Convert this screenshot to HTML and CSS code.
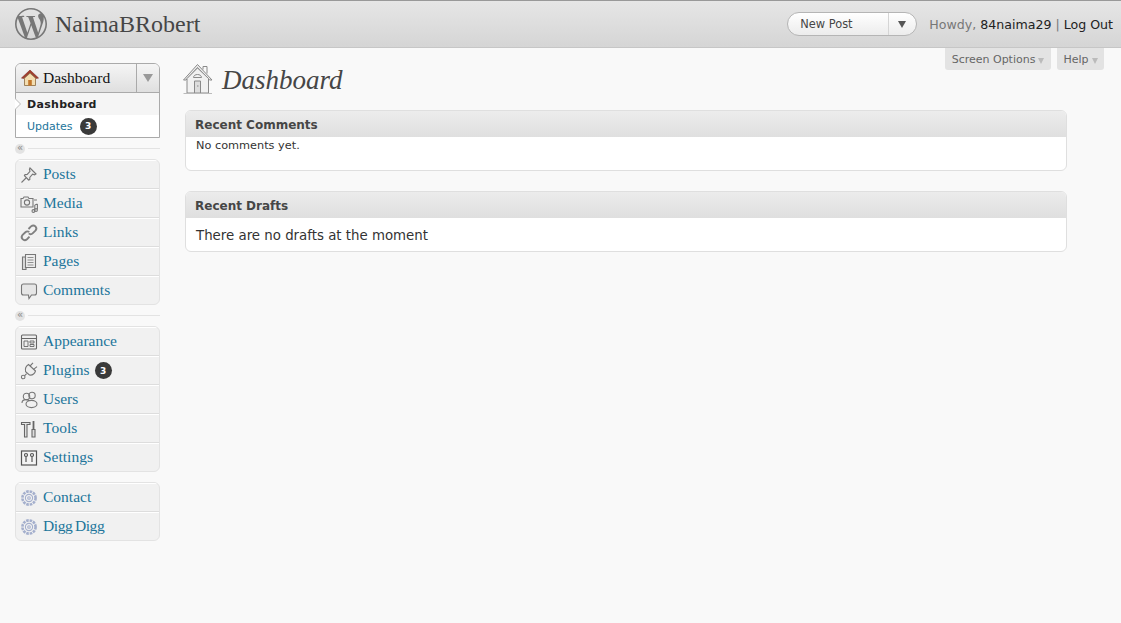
FILE: index.html
```html
<!DOCTYPE html>
<html lang="en">
<head>
    <meta charset="UTF-8">
    <title>Dashboard - NaimaBRobert</title>
    <link rel="stylesheet" href="styles.css">
</head>
<body>
    <header class="top-bar">
        <div class="site-title">
            <svg class="wp-logo" viewBox="0 0 24 24" width="32" height="32">
                <path fill="#777" d="M21.469 6.825c.84 1.537 1.318 3.3 1.318 5.175 0 3.979-2.156 7.456-5.363 9.325l3.295-9.527c.615-1.54.82-2.771.82-3.864 0-.405-.026-.78-.07-1.11m-7.981.105c.647-.03 1.232-.105 1.232-.105.582-.075.514-.93-.067-.899 0 0-1.755.135-2.88.135-1.064 0-2.85-.15-2.85-.15-.585-.03-.661.855-.075.885 0 0 .54.061 1.125.09l1.68 4.605-2.37 7.08L5.354 6.9c.649-.03 1.234-.1 1.234-.1.585-.075.516-.93-.065-.896 0 0-1.746.138-2.874.138-.2 0-.438-.008-.69-.015C4.911 3.15 8.235 1.215 12 1.215c2.809 0 5.365 1.072 7.286 2.833-.046-.003-.091-.009-.141-.009-1.06 0-1.812.923-1.812 1.914 0 .89.513 1.643 1.06 2.531.411.72.89 1.643.89 2.977 0 .915-.354 1.994-.821 3.479l-1.075 3.585-3.9-11.61.001.014zM12 22.784c-1.059 0-2.081-.153-3.048-.437l3.237-9.406 3.315 9.087c.024.053.05.101.078.149-1.12.393-2.325.609-3.582.609M1.211 12c0-1.564.336-3.05.935-4.39L7.29 21.709C3.694 19.96 1.212 16.271 1.211 12M12 0C5.385 0 0 5.385 0 12s5.385 12 12 12 12-5.385 12-12S18.615 0 12 0"/>
            </svg>
            <span class="site-name">NaimaBRobert</span>
        </div>
        <div class="user-area">
            <div class="new-post">
                <span class="new-post-label">New Post</span>
                <span class="new-post-arrow"></span>
            </div>
            <div class="howdy">Howdy, <a href="#">84naima29</a> | <a href="#">Log Out</a></div>
        </div>
    </header>

    <div class="page">
        <nav class="sidebar">
            <div class="dash-menu">
                <div class="dash-head">
                    <svg class="menu-icon" viewBox="0 0 20 20" width="20" height="20">
                        <path d="M1.5 10 L10 2 L18.5 10 L16.4 10.4 L10 4.8 L3.6 10.4 Z" fill="#a33d2c" stroke="#7a2a1f" stroke-width=".6"/>
                        <path d="M4.5 10.2 L10 5.2 L15.5 10.2 V17.5 H4.5 Z" fill="#f3ddb0" stroke="#8a6a3e" stroke-width=".8"/>
                        <rect x="8.2" y="12" width="3.6" height="5.5" fill="#c2772c"/>
                    </svg>
                    <span class="dash-title">Dashboard</span>
                    <span class="dash-toggle"></span>
                </div>
                <div class="dash-sub current">Dashboard</div>
                <div class="dash-sub"><a href="#">Updates</a><span class="badge">3</span></div>
            </div>
            <div class="separator"><span class="sep-arrows">«</span></div>

            <ul class="menu-group">
                <li class="menu-item">
                    <svg class="menu-icon" viewBox="0 0 20 20" width="20" height="20" fill="none" stroke="#777" stroke-width="1.1">
                        <path d="M11 3 L17 9 L15.6 9.8 L13.6 9.2 L10.8 12.4 L10.8 14.6 L9.6 15 L5.4 10.6 L6 9.6 L8.2 9.4 L11 6.4 L10.4 4.4 Z" fill="#eee"/>
                        <path d="M7 13 L2.5 17.5"/>
                    </svg>
                    <a href="#">Posts</a>
                </li>
                <li class="menu-item">
                    <svg class="menu-icon" viewBox="0 0 20 20" width="20" height="20" fill="none" stroke="#777" stroke-width="1.1">
                        <path d="M2 4.5 H4 L5 3 H9 L10 4.5 H14 V13 H2 Z" fill="#eee"/>
                        <circle cx="8" cy="8.5" r="2.6"/>
                        <path d="M15 6 H18 M15.8 11 V16.5 M18.4 10 V15.5 M15.8 11 L18.4 10"/>
                        <circle cx="14.4" cy="17" r="1.4"/>
                        <circle cx="17" cy="16" r="1.4"/>
                    </svg>
                    <a href="#">Media</a>
                </li>
                <li class="menu-item">
                    <svg class="menu-icon" viewBox="0 0 20 20" width="20" height="20" fill="none" stroke="#808080" stroke-width="1.9">
                        <path d="M9.5 6 L12 3.4 C13.4 2.2 15.2 2.2 16.4 3.4 C17.6 4.7 17.6 6.4 16.4 7.7 L13.6 10.4 C12.4 11.6 10.8 11.4 9.8 10.4"/>
                        <path d="M10.5 13.6 L8 16.2 C6.6 17.4 4.8 17.4 3.6 16.2 C2.4 14.9 2.4 13.2 3.6 11.9 L6.4 9.2 C7.6 8 9.2 8.2 10.2 9.2"/>
                    </svg>
                    <a href="#">Links</a>
                </li>
                <li class="menu-item">
                    <svg class="menu-icon" viewBox="0 0 20 20" width="20" height="20" fill="none" stroke="#777" stroke-width="1.1">
                        <path d="M3.5 5 H7 V17.5 H3.5 Z" fill="#ddd"/>
                        <path d="M6.5 2.5 H16.5 V15.5 H6.5 Z" fill="#eee"/>
                        <path d="M8.5 5.5 H14.5 M8.5 8 H14.5 M8.5 10.5 H14.5 M8.5 13 H14.5" stroke-width=".8"/>
                    </svg>
                    <a href="#">Pages</a>
                </li>
                <li class="menu-item">
                    <svg class="menu-icon" viewBox="0 0 20 20" width="20" height="20" fill="none" stroke="#777" stroke-width="1.1">
                        <path d="M4.5 3 H15.5 C16.6 3 17.5 3.8 17.5 5 V12 C17.5 13.2 16.6 14 15.5 14 H12.5 L10 17.5 L9.4 14 H4.5 C3.4 14 2.5 13.2 2.5 12 V5 C2.5 3.8 3.4 3 4.5 3 Z" fill="#e6e6e6"/>
                    </svg>
                    <a href="#">Comments</a>
                </li>
            </ul>
            <div class="separator"><span class="sep-arrows">«</span></div>

            <ul class="menu-group">
                <li class="menu-item">
                    <svg class="menu-icon" viewBox="0 0 20 20" width="20" height="20" fill="none" stroke="#666" stroke-width="1.1">
                        <rect x="2.5" y="3" width="15" height="14" rx="1" fill="#eee"/>
                        <path d="M2.5 6.5 H17.5"/>
                        <path d="M5 9 H9 V14.5 H5 Z M11 9 H15 V11 H11 Z M11 12.5 H15 V14.5 H11 Z" stroke-width=".9"/>
                    </svg>
                    <a href="#">Appearance</a>
                </li>
                <li class="menu-item">
                    <svg class="menu-icon" viewBox="0 0 20 20" width="20" height="20" fill="none" stroke="#777" stroke-width="1.1">
                        <path d="M9.5 3.5 L16.5 10 C15.6 12.6 13 14.4 10.4 14 L6.6 10.6 C6 8 7 5 9.5 3.5 Z" fill="#eee"/>
                        <path d="M11 5 L14 1.8 M14.6 8.4 L18 5.6"/>
                        <path d="M7.6 12.6 L5.5 14.8"/>
                        <circle cx="4.2" cy="16" r="1.8"/>
                    </svg>
                    <a href="#">Plugins</a><span class="badge">3</span>
                </li>
                <li class="menu-item">
                    <svg class="menu-icon" viewBox="0 0 20 20" width="20" height="20" fill="none" stroke="#777" stroke-width="1.1">
                        <circle cx="7.5" cy="6.5" r="3.2"/>
                        <circle cx="13" cy="5.5" r="3.2"/>
                        <path d="M3 13 C3 10.4 5 9.6 7 9.6 C9 9.6 9.6 10.4 9.6 11"/>
                        <ellipse cx="12.5" cy="14" rx="5.5" ry="3.6" fill="#f1f1f1"/>
                    </svg>
                    <a href="#">Users</a>
                </li>
                <li class="menu-item">
                    <svg class="menu-icon" viewBox="0 0 20 20" width="20" height="20" fill="none" stroke="#666" stroke-width="1.1">
                        <path d="M2.5 3.5 H11 V5.5 H8 V18 H5.5 V5.5 H2.5 Z" fill="#e4e4e4"/>
                        <path d="M13 10.5 H16 V18 H13 Z" fill="#ddd"/>
                        <path d="M14.5 2 V10.5" stroke-width="1.8"/>
                    </svg>
                    <a href="#">Tools</a>
                </li>
                <li class="menu-item">
                    <svg class="menu-icon" viewBox="0 0 20 20" width="20" height="20" fill="none" stroke="#555" stroke-width="1.2">
                        <rect x="2.5" y="3" width="15" height="14" fill="#f4f4f4"/>
                        <circle cx="7" cy="7" r="1.5"/>
                        <path d="M7 8.5 V14"/>
                        <circle cx="13" cy="7" r="1.5"/>
                        <path d="M13 8.5 V14"/>
                    </svg>
                    <a href="#">Settings</a>
                </li>
            </ul>

            <ul class="menu-group plugin-group">
                <li class="menu-item">
                    <svg class="menu-icon" viewBox="0 0 20 20" width="20" height="20" fill="none" stroke="#a4afcd" stroke-width="1.1">
                        <circle cx="10" cy="10" r="6.6" stroke-width="2.6" stroke-dasharray="2.6 .9"/>
                        <circle cx="10" cy="10" r="3.6"/>
                        <circle cx="10" cy="10" r="1.3"/>
                    </svg>
                    <a href="#">Contact</a>
                </li>
                <li class="menu-item">
                    <svg class="menu-icon" viewBox="0 0 20 20" width="20" height="20" fill="none" stroke="#a4afcd" stroke-width="1.1">
                        <circle cx="10" cy="10" r="6.6" stroke-width="2.6" stroke-dasharray="2.6 .9"/>
                        <circle cx="10" cy="10" r="3.6"/>
                        <circle cx="10" cy="10" r="1.3"/>
                    </svg>
                    <a href="#" class="tight">Digg Digg</a>
                </li>
            </ul>
        </nav>

        <main class="content">
            <div class="screen-tabs">
                <div class="screen-tab">Screen Options<span class="tab-arrow"></span></div>
                <div class="screen-tab">Help<span class="tab-arrow"></span></div>
            </div>
            <div class="page-heading">
                <svg class="heading-icon" viewBox="0 0 32 32" width="32" height="32" fill="none" stroke="#8a8a8a" stroke-width="1">
                    <path d="M21 6.5 V3.5 H25 V10.5"/>
                    <path d="M1.5 17 L15.5 1.5 L30 17 L27.5 17 L15.5 4.5 L4 17 Z" fill="#ececec"/>
                    <path d="M5 15.5 L15.5 5 L26.5 15.5 V30 H5 Z" fill="#f1f1f1"/>
                    <path d="M11.5 14.5 C11.5 10.5 19.5 10.5 19.5 14.5 Z"/>
                    <path d="M12.5 18 H18.5 V30 H12.5 Z" fill="#ddd"/>
                    <path d="M15 23 H16.5"/>
                    <path d="M1.5 30.5 H30" stroke="#bbb"/>
                </svg>
                <h2>Dashboard</h2>
            </div>

            <section class="widget">
                <h3 class="widget-title">Recent Comments</h3>
                <div class="widget-body comments-body">No comments yet.</div>
            </section>
            <section class="widget">
                <h3 class="widget-title">Recent Drafts</h3>
                <div class="widget-body drafts-body">There are no drafts at the moment</div>
            </section>
        </main>
    </div>
</body>
</html>
```

FILE: styles.css
```css
body {
    margin: 0;
    background: #f9f9f9;
    font-family: "DejaVu Sans", Verdana, sans-serif;
    color: #333;
    overflow: hidden;
}

a {
    color: #21759b;
    text-decoration: none;
}

ul {
    list-style: none;
    margin: 0;
    padding: 0;
}

/* top bar */
.top-bar {
    height: 46px;
    border-top: 1px solid #999;
    border-bottom: 1px solid #c6c6c6;
    background: linear-gradient(to bottom, #e6e6e6, #d5d5d5);
    display: flex;
    justify-content: space-between;
    align-items: center;
    padding: 0 8px 0 15px;
}

.site-title {
    display: flex;
    align-items: center;
    gap: 8px;
}

.wp-logo {
    display: block;
}

.site-name {
    font-family: "Liberation Serif", Georgia, serif;
    font-size: 24px;
    color: #464646;
}

.user-area {
    display: flex;
    align-items: center;
    gap: 12px;
}

.new-post {
    width: 128px;
    height: 22px;
    border: 1px solid #b5b5b5;
    border-radius: 12px;
    background: linear-gradient(to bottom, #fff, #ececec);
    display: flex;
    align-items: center;
    font-size: 11.4px;
    color: #464646;
}

.new-post-label {
    flex: 1;
    padding-left: 12px;
}

.new-post-arrow {
    width: 27px;
    height: 22px;
    border-left: 1px solid #d5d5d5;
    position: relative;
}

.new-post-arrow::after {
    content: "";
    position: absolute;
    left: 9px;
    top: 8px;
    border-left: 4px solid transparent;
    border-right: 4px solid transparent;
    border-top: 7px solid #555;
}

.howdy {
    font-size: 12.6px;
    color: #777;
}

.howdy a {
    color: #222;
}

/* page layout */
.page {
    display: flex;
    align-items: flex-start;
    padding-left: 15px;
}

.sidebar {
    width: 145px;
    flex-shrink: 0;
    padding-top: 15px;
    font-family: "Liberation Serif", Georgia, serif;
    font-size: 15.5px;
}

.dash-menu {
    box-sizing: border-box;
    height: 75px;
    border: 1px solid #aaa;
    border-radius: 6px 6px 0 0;
    background: #fff;
    font-family: "DejaVu Sans", Verdana, sans-serif;
    font-size: 11px;
}

.dash-head {
    height: 28px;
    border-bottom: 1px solid #aaa;
    border-radius: 5px 5px 0 0;
    background: linear-gradient(to bottom, #f5f5f5, #dfdfdf);
    display: flex;
    align-items: center;
    padding-left: 4px;
    font-family: "Liberation Serif", Georgia, serif;
    font-size: 15.5px;
    color: #111;
}

.dash-title {
    flex: 1;
    padding-left: 3px;
}

.dash-toggle {
    width: 22px;
    height: 28px;
    border-left: 1px solid #aaa;
    position: relative;
}

.dash-toggle::after {
    content: "";
    position: absolute;
    left: 6px;
    top: 10px;
    border-left: 5px solid transparent;
    border-right: 5px solid transparent;
    border-top: 8px solid #999;
}

.dash-sub {
    height: 22px;
    display: flex;
    align-items: center;
    padding-left: 11px;
}

.dash-sub.current {
    background: #f5f5f5;
    font-weight: bold;
    color: #222;
    letter-spacing: .3px;
    position: relative;
}

.dash-sub.current::before,
.dash-sub.current::after {
    content: "";
    position: absolute;
    top: 5px;
    border-top: 6px solid transparent;
    border-bottom: 6px solid transparent;
}

.dash-sub.current::before {
    left: -1px;
    border-left: 6px solid #bbb;
}

.dash-sub.current::after {
    left: -1px;
    margin-top: 1px;
    border-top-width: 5px;
    border-bottom-width: 5px;
    border-left: 5px solid #fff;
}

.badge {
    width: 17px;
    height: 17px;
    border-radius: 50%;
    background: #3a3a3a;
    color: #fff;
    font-family: "DejaVu Sans", Verdana, sans-serif;
    font-size: 9px;
    font-weight: bold;
    display: inline-flex;
    align-items: center;
    justify-content: center;
    margin-left: 7px;
}

.separator {
    height: 21px;
    display: flex;
    align-items: center;
}

.separator::after {
    content: "";
    flex: 1;
    height: 1px;
    background: #e3e3e3;
    margin-left: 3px;
}

.sep-arrows {
    width: 10px;
    height: 10px;
    border-radius: 50%;
    background: #e3e3e3;
    color: #888;
    font-size: 10px;
    line-height: 8px;
    text-align: center;
    font-family: "DejaVu Sans", sans-serif;
}

.menu-group {
    border: 1px solid #e3e3e3;
    border-radius: 6px;
    background: #f1f1f1;
    overflow: hidden;
}

.plugin-group {
    margin-top: 10px;
}

.menu-item {
    box-sizing: border-box;
    height: 29px;
    border-top: 1px solid #fff;
    border-bottom: 1px solid #ddd;
    display: flex;
    align-items: center;
    padding-left: 3px;
}

.menu-item:last-child {
    border-bottom: none;
    height: 28px;
}

.menu-item a {
    padding-left: 4px;
    margin-bottom: 2px;
}

.menu-item a.tight {
    letter-spacing: -.4px;
    word-spacing: -1px;
}

.menu-item .badge {
    margin-left: 5px;
}

.menu-icon {
    display: block;
    flex-shrink: 0;
}

/* main */
.content {
    width: 882px;
    margin-left: 25px;
}

.screen-tabs {
    display: flex;
    justify-content: flex-end;
    gap: 6px;
    height: 22px;
    width: 919px;
    margin-bottom: -7px;
}

.screen-tab {
    background: #e3e3e3;
    border-radius: 0 0 3px 3px;
    height: 22px;
    line-height: 23px;
    padding: 0 6.5px;
    font-size: 11px;
    color: #666;
}

.tab-arrow {
    display: inline-block;
    margin-left: 3px;
    border-left: 3.5px solid transparent;
    border-right: 3.5px solid transparent;
    border-top: 6px solid #bbb;
    vertical-align: -1px;
}

.page-heading {
    display: flex;
    align-items: center;
    height: 32px;
    margin-left: -3px;
    margin-bottom: 15px;
    gap: 8px;
}

.heading-icon {
    display: block;
}

.page-heading h2 {
    margin: 2px 0 0;
    font-family: "Liberation Serif", Georgia, serif;
    font-style: italic;
    font-weight: normal;
    font-size: 27px;
    color: #464646;
}

.widget {
    box-sizing: border-box;
    border: 1px solid #dfdfdf;
    border-radius: 6px;
    background: #fff;
    overflow: hidden;
    margin-bottom: 20px;
}

.widget-title {
    margin: 0;
    height: 26px;
    line-height: 28px;
    padding-left: 9px;
    background: linear-gradient(to bottom, #ececec, #dfdfdf);
    font-size: 12px;
    font-weight: bold;
    color: #464646;
}

.widget-body {
    padding-left: 10px;
}

.comments-body {
    height: 33px;
    font-size: 11.3px;
    line-height: 18px;
}

.drafts-body {
    height: 33px;
    font-size: 13.35px;
    line-height: 36px;
}
```
